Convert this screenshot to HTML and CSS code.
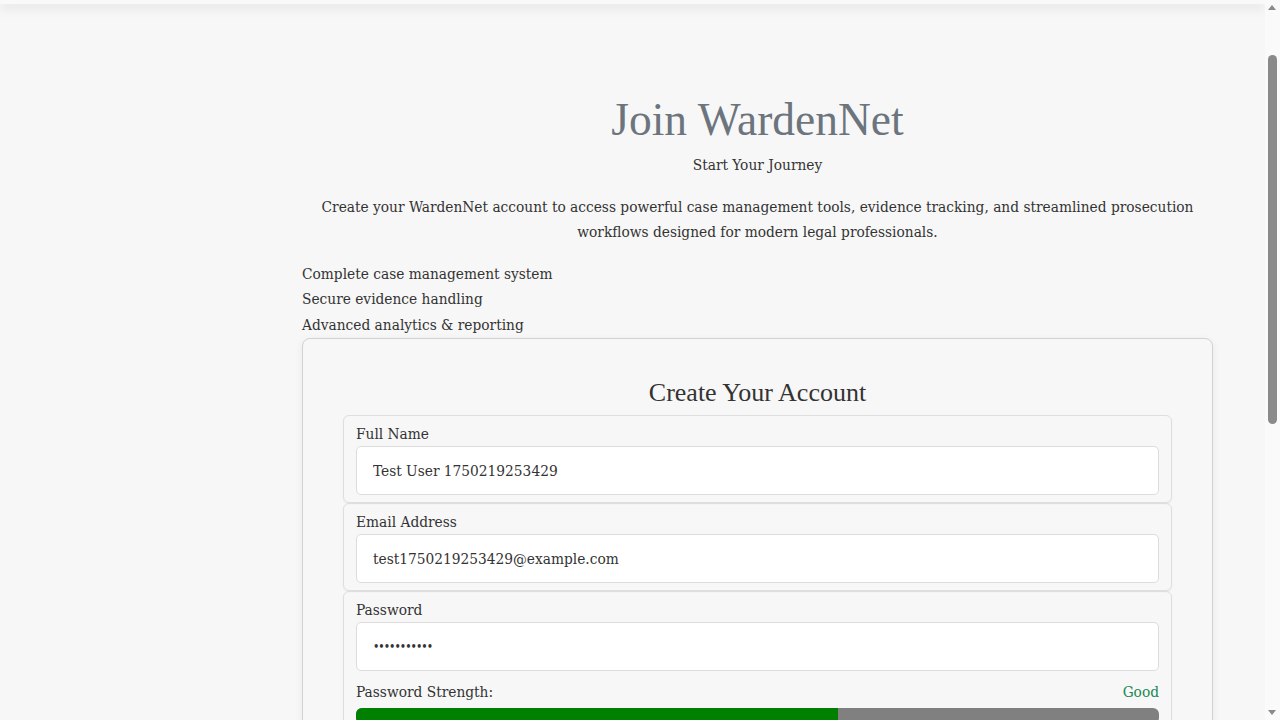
FILE: index.html
```html
<!DOCTYPE html>
<html lang="en">
<head>
<meta charset="utf-8">
<title>Join WardenNet</title>
<link rel="stylesheet" href="styles.css">
</head>
<body>
<div class="topbar"></div>
<div class="layout">
  <aside class="side"></aside>
  <main class="main">
    <header class="intro">
      <h1 class="title">Join WardenNet</h1>
      <p class="subtitle">Start Your Journey</p>
      <p class="lead">Create your WardenNet account to access powerful case management tools, evidence tracking, and streamlined prosecution workflows designed for modern legal professionals.</p>
    </header>
    <ul class="features">
      <li>Complete case management system</li>
      <li>Secure evidence handling</li>
      <li>Advanced analytics &amp; reporting</li>
    </ul>
    <section class="card">
      <h2 class="card-title">Create Your Account</h2>
      <form class="form">
        <div class="group">
          <label class="label" for="name">Full Name</label>
          <input class="input" id="name" type="text" value="Test User 1750219253429">
        </div>
        <div class="group">
          <label class="label" for="email">Email Address</label>
          <input class="input" id="email" type="email" value="test1750219253429@example.com">
        </div>
        <div class="group">
          <label class="label" for="pw">Password</label>
          <input class="input input-pw" id="pw" type="password" value="Password123">
          <div class="strength-row">
            <span>Password Strength:</span>
            <span class="good">Good</span>
          </div>
          <div class="bar"><div class="bar-fill" style="width:60%"></div></div>
        </div>
      </form>
    </section>
  </main>
</div>
<div class="scrollbar" aria-hidden="true">
  <span class="arrow-up"></span>
  <span class="thumb"></span>
  <span class="arrow-down"></span>
</div>
</body>
</html>
```
FILE: styles.css
```css
html, body {
  margin: 0;
  padding: 0;
}
body {
  background: #f7f7f7;
  color: #333;
  font-family: "DejaVu Serif Condensed", "DejaVu Serif", serif;
  font-size: 15.3px;
  line-height: 25.6px;
}
.topbar {
  position: fixed;
  top: 0;
  left: 0;
  right: 15px;
  height: 4px;
  background: #f9f9f9;
  box-shadow: 0 3px 12px rgba(0, 0, 0, 0.15);
  z-index: 10;
}
.layout {
  display: grid;
  grid-template-columns: 250px 1fr;
  margin-right: 15px;
}
.main {
  padding: 95px 52px 80px;
}
.intro {
  text-align: center;
}
.title {
  margin: 0;
  font-family: "Liberation Serif", serif;
  font-weight: normal;
  font-size: 45.5px;
  line-height: 50px;
  color: #6c757d;
}
.subtitle {
  margin: 8px 0 0;
}
.lead {
  max-width: 880px;
  margin: 16px auto 0;
  line-height: 25px;
}
.features {
  list-style: none;
  margin: 17px 0 0;
  padding: 0;
}
.card {
  border: 1px solid #d2d2d2;
  border-radius: 8px;
  background: #f7f7f7;
  box-shadow: 0 2px 8px rgba(0, 0, 0, 0.06);
  padding: 40px;
}
.card-title {
  margin: 0 0 8px;
  text-align: center;
  font-family: "Liberation Serif", serif;
  font-weight: normal;
  font-size: 26px;
  line-height: 28px;
  color: #333;
}
.form {
  display: flex;
  flex-direction: column;
}
.group {
  border: 1px solid #dedede;
  border-radius: 6px;
  padding: 6px 12px 7px;
  box-shadow: 0 1px 2px rgba(0, 0, 0, 0.06);
  display: flex;
  flex-direction: column;
}
.label {
  display: block;
  line-height: 24px;
}
.input {
  box-sizing: border-box;
  height: 49px;
  width: 100%;
  border: 1px solid #dcdcdc;
  border-radius: 5px;
  background: #fff;
  padding: 0 16px;
  font-family: inherit;
  font-size: 15.3px;
  color: #333;
}
.input-pw {
  font-size: 12px;
  letter-spacing: -1px;
}
.strength-row {
  display: flex;
  justify-content: space-between;
  margin-top: 9px;
  line-height: 24px;
}
.good {
  color: #198754;
}
.bar {
  margin-top: 4px;
  height: 16px;
  border-radius: 6px;
  background: #808080;
  overflow: hidden;
}
.bar-fill {
  height: 100%;
  background: #008000;
}
.scrollbar {
  position: fixed;
  top: 0;
  right: 0;
  bottom: 0;
  width: 15px;
  background: #fafafa;
  z-index: 20;
}
.arrow-up,
.arrow-down {
  position: absolute;
  left: 3px;
  width: 0;
  height: 0;
  border-left: 4.5px solid transparent;
  border-right: 4.5px solid transparent;
}
.arrow-up {
  top: 5px;
  border-bottom: 5px solid #8a8a8a;
}
.arrow-down {
  bottom: 5px;
  border-top: 5px solid #8a8a8a;
}
.thumb {
  position: absolute;
  top: 55px;
  left: 3px;
  width: 9px;
  height: 369px;
  border-radius: 5px;
  background: #8a8a8a;
}
```
